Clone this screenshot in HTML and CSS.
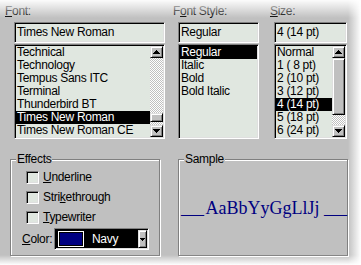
FILE: index.html
```html
<!DOCTYPE html>
<html lang="en">
<head>
  <meta charset="UTF-8">
  <title>Font</title>
  <link rel="stylesheet" href="styles.css">
</head>
<body>

  <div class="dialog">
    <!-- Top: font / style / size pickers -->
    <div class="pickers">
      <div class="picker picker-font">
        <div class="label"><u>F</u>ont:</div>
        <div class="field sunken">Times New Roman</div>
        <div class="list sunken">
          <ul class="items">
            <li>Technical</li>
            <li>Technology</li>
            <li>Tempus Sans ITC</li>
            <li>Terminal</li>
            <li>Thunderbird BT</li>
            <li class="selected">Times New Roman</li>
            <li>Times New Roman CE</li>
          </ul>
          <div class="scrollbar">
            <div class="sb-btn bevel">
              <svg width="7" height="4" viewBox="0 0 7 4"><path d="M3.5 0L7 4H0z"/></svg>
            </div>
            <div class="track">
              <div class="thumb thumb-low bevel"></div>
            </div>
            <div class="sb-btn bevel">
              <svg width="7" height="4" viewBox="0 0 7 4"><path d="M0 0H7L3.5 4z"/></svg>
            </div>
          </div>
        </div>
      </div>

      <div class="picker picker-style">
        <div class="label">F<u>o</u>nt Style:</div>
        <div class="field sunken">Regular</div>
        <div class="list sunken">
          <ul class="items">
            <li class="selected">Regular</li>
            <li>Italic</li>
            <li>Bold</li>
            <li>Bold Italic</li>
          </ul>
        </div>
      </div>

      <div class="picker picker-size">
        <div class="label"><u>S</u>ize:</div>
        <div class="field sunken">4 (14 pt)</div>
        <div class="list sunken">
          <ul class="items">
            <li>Normal</li>
            <li>1 ( 8 pt)</li>
            <li>2 (10 pt)</li>
            <li>3 (12 pt)</li>
            <li class="selected">4 (14 pt)</li>
            <li>5 (18 pt)</li>
            <li>6 (24 pt)</li>
          </ul>
          <div class="scrollbar">
            <div class="sb-btn bevel">
              <svg width="7" height="4" viewBox="0 0 7 4"><path d="M3.5 0L7 4H0z"/></svg>
            </div>
            <div class="track">
              <div class="thumb thumb-high bevel"></div>
            </div>
            <div class="sb-btn bevel">
              <svg width="7" height="4" viewBox="0 0 7 4"><path d="M0 0H7L3.5 4z"/></svg>
            </div>
          </div>
        </div>
      </div>
    </div>

    <!-- Bottom: effects and sample -->
    <div class="lower">
      <div class="group effects">
        <div class="group-title">Effects</div>
        <div class="check-row"><span class="checkbox sunken"></span><span><u>U</u>nderline</span></div>
        <div class="check-row"><span class="checkbox sunken"></span><span>Stri<u>k</u>ethrough</span></div>
        <div class="check-row"><span class="checkbox sunken"></span><span><u>T</u>ypewriter</span></div>
        <div class="color-row">
          <span class="color-label"><u>C</u>olor:</span>
          <div class="combo sunken">
            <div class="combo-value">
              <span class="swatch"></span>
              <span>Navy</span>
            </div>
            <div class="combo-btn bevel">
              <svg width="5" height="3" viewBox="0 0 5 3"><path d="M0 0H5L2.5 3z"/></svg>
            </div>
          </div>
        </div>
      </div>

      <div class="group sample">
        <div class="group-title">Sample</div>
        <div class="sample-body">
          <span class="rule">___</span> AaBbYyGgLlJj <span class="rule">___</span>
        </div>
      </div>
    </div>
  </div>

  <div class="fade"></div>

</body>
</html>
```

FILE: styles.css
```css
* {
  margin: 0;
  padding: 0;
  box-sizing: border-box;
}

html,
body {
  width: 361px;
  height: 265px;
  overflow: hidden;
}

body {
  position: relative;
  background-color: #c0c0c0;
  color: #000;
  font-family: "Liberation Sans", Arial, sans-serif;
  font-size: 12px;
  line-height: 13px;
  letter-spacing: -0.3px;
}

u {
  text-decoration: underline;
  text-underline-offset: 1px;
}

.dialog {
  padding: 5px 0 0 5px;
}

/* 3d borders */
.sunken {
  border: 1px solid;
  border-color: #808080 #fff #fff #808080;
  box-shadow: inset 1px 1px #000, inset -1px -1px #dfdfdf;
  background-color: #e0e7e0;
}

.bevel {
  border: 1px solid;
  border-color: #dfdfdf #000 #000 #dfdfdf;
  box-shadow: inset 1px 1px #fff, inset -1px -1px #808080;
  background-color: #c0c0c0;
}

/* pickers */
.pickers {
  display: flex;
}

.picker-font {
  width: 160px;
}

.picker-style {
  margin-left: 8px;
}

.picker-size {
  margin-left: 11px;
}

.label {
  height: 13px;
  margin-bottom: 4px;
  white-space: nowrap;
}

.field {
  height: 21px;
  padding: 3px 2px;
  white-space: pre;
}

.list {
  display: flex;
  height: 95px;
  margin-top: 1px;
  padding: 1px;
}

.picker-font .field,
.picker-font .list {
  width: 151px;
  margin-left: 9px;
}

.picker-style .field,
.picker-style .list {
  width: 81px;
  margin-left: 5px;
}

.picker-size .field,
.picker-size .list {
  width: 73px;
  margin-left: 4px;
}

.items {
  flex: 1;
  list-style: none;
  overflow: hidden;
}

.items li {
  height: 13px;
  padding-left: 1px;
  white-space: pre;
}

.items li.selected {
  background-color: #000;
  color: #fff;
}

/* scrollbars */
.scrollbar {
  display: flex;
  flex-direction: column;
  width: 13px;
}

.sb-btn {
  display: flex;
  align-items: center;
  justify-content: center;
  height: 12px;
}

.sb-btn svg,
.combo-btn svg {
  display: block;
  shape-rendering: crispEdges;
}

.track {
  flex: 1;
  display: flex;
  flex-direction: column;
  background-image: repeating-conic-gradient(#fff 0 25%, #c0c0c0 0 50%);
  background-size: 2px 2px;
}

.thumb-low {
  height: 9px;
  margin-top: auto;
  margin-bottom: 3px;
}

.thumb-high {
  height: 57px;
}

/* lower part */
.lower {
  display: flex;
  margin-top: 20px;
}

.group {
  position: relative;
  height: 97px;
  border: 1px solid #808080;
  box-shadow: inset 1px 1px #fff, 1px 1px #fff;
}

.group-title {
  position: absolute;
  top: -7px;
  left: 5px;
  padding: 0 1px;
  background-color: #c0c0c0;
  line-height: 13px;
}

.effects {
  width: 150px;
  margin-left: 5px;
  padding: 7px 0 0 15px;
}

.check-row {
  display: flex;
  align-items: center;
  height: 20px;
}

.checkbox {
  width: 13px;
  height: 13px;
  margin-right: 4px;
}

.color-row {
  display: flex;
  align-items: center;
  height: 22px;
  margin: 1px 0 0 -4px;
}

.color-label {
  width: 32px;
}

.combo {
  display: flex;
  width: 95px;
  height: 22px;
  padding: 1px;
}

.combo-value {
  flex: 1;
  display: flex;
  align-items: center;
  background-color: #000;
  color: #fff;
}

.swatch {
  width: 26px;
  height: 16px;
  margin: 0 8px 0 2px;
  border: 1px solid #fff;
  background-color: #000080;
  box-shadow: inset 0 0 0 1px #000;
}

.combo-btn {
  display: flex;
  align-items: center;
  justify-content: center;
  width: 9px;
}

.sample {
  width: 170px;
  margin-left: 18px;
}

.sample-body {
  display: flex;
  align-items: center;
  justify-content: center;
  height: 100%;
  font-family: "Liberation Serif", "Times New Roman", serif;
  font-size: 18px;
  line-height: 22px;
  letter-spacing: 0;
  color: #000080;
  white-space: pre;
}

.rule {
  letter-spacing: -2px;
}

/* soft edges of the cut-out */
.fade {
  position: absolute;
  inset: 0;
  pointer-events: none;
  background:
    linear-gradient(to bottom, rgba(255, 255, 255, 0.95), rgba(255, 255, 255, 0)) top / 100% 18px no-repeat,
    linear-gradient(to left, #fff, rgba(255, 255, 255, 0.6) 40%, rgba(255, 255, 255, 0)) right / 13px 100% no-repeat,
    linear-gradient(to top, #fff, rgba(255, 255, 255, 0.6) 40%, rgba(255, 255, 255, 0)) bottom / 100% 10px no-repeat;
}
```
